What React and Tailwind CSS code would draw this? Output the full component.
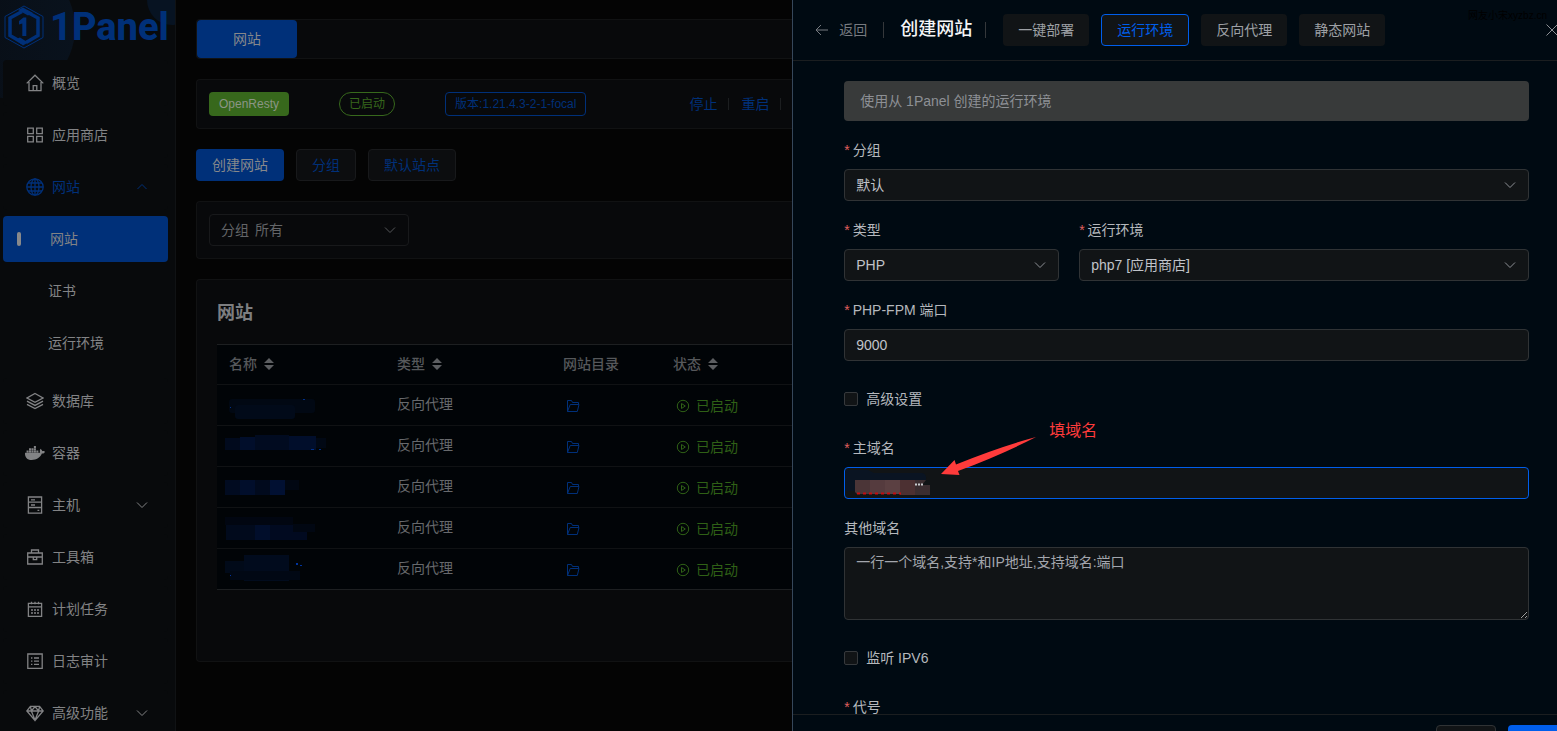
import { useState } from "react";
import { FaDocker } from "react-icons/fa";

function Icon({ children, className = "size-[18px]" }) {
  return (
    <svg
      viewBox="0 0 18 18"
      className={className}
      fill="none"
      stroke="currentColor"
      strokeWidth="1.3"
      aria-hidden
    >
      {children}
    </svg>
  );
}

const HomeIcon = () => (
  <Icon>
    <path d="M.7 9.4 9 1.2l8.3 8.2M3 8v8.6h12V8M7.2 16.6v-5h3.6v5" />
  </Icon>
);

const GridIcon = () => (
  <Icon>
    <path d="M1.7 2.2h5.6v5.4H1.7zM10.7 2.2h5.6v5.4h-5.6zM1.7 10.4h5.6v5.4H1.7zM10.7 10.4h5.6v5.4h-5.6z" />
  </Icon>
);

const GlobeIcon = () => (
  <Icon>
    <circle cx="9" cy="9" r="8.2" />
    <ellipse cx="9" cy="9" rx="4" ry="8.2" />
    <path d="M9 .8v16.4M.8 9h16.4M2 5h14M2 13h14" />
  </Icon>
);

const LayersIcon = () => (
  <Icon>
    <path d="M9 1.5 17 6 9 10.3 1 6zM1 9.2l8 4.2 8-4.2M1 12.3l8 4.2 8-4.2" />
  </Icon>
);

const HostIcon = () => (
  <Icon>
    <path d="M2.4 1h13.2v16.2H2.4zM2.4 6.2h13.2M2.4 11.5h13.2M5 3.8h4M5 9h4M11.5 14.3h1.8" />
  </Icon>
);

const ToolboxIcon = () => (
  <Icon>
    <path d="M1.7 5h14.6v11H1.7zM5.5 5V2h7v3M1.7 9h14.6M7.3 9v2.6h3.4V9" />
  </Icon>
);

const CalendarIcon = () => (
  <Icon>
    <path d="M2.4 3.3h13.2v13H2.4zM2.4 6.8h13.2M5.5 1.8v2.4M9 1.8v2.4M12.5 1.8v2.4" />
    <path d="M5 10h8M5 13h8" strokeDasharray="2 1" />
  </Icon>
);

const LogIcon = () => (
  <Icon>
    <path d="M1.8 2h14.4v14.4H1.8zM8 6h5M8 9.2h5M8 12.4h5M5 6h1.4M5 9.2h1.4M5 12.4h1.4" />
  </Icon>
);

const GemIcon = () => (
  <Icon>
    <path d="M4.4 2.4h9.2L17.2 7 9 16.4.8 7zM.8 7h16.4M5.4 7 9 16.2 12.6 7M4.4 2.4l1 4.6L9 2.6 12.6 7l1-4.6" />
  </Icon>
);

function Chevron({ up = false, className = "" }) {
  return (
    <svg viewBox="0 0 12 12" className={`size-3 ${className}`} fill="none" stroke="currentColor" aria-hidden>
      <path d={up ? "M1.5 8 6 3.5 10.500 8" : "M1 3.500 6 8.500 11 3.500"} />
    </svg>
  );
}

const FolderIcon = () => (
  <svg viewBox="0 0 14 14" className="size-3.5" fill="none" stroke="currentColor" aria-hidden>
    <path d="M1.500 12.500v-11h4l1 2h6v2M1.500 12.500h9.800l1.700-7H4.200z" />
  </svg>
);

const PlayIcon = () => (
  <svg viewBox="0 0 14 14" className="size-3.5" fill="none" stroke="currentColor" aria-hidden>
    <circle cx="7" cy="7" r="5.700" />
    <path d="M5.500 4.500v5L9.300 7z" />
  </svg>
);

const menu = [
  { label: "概览", icon: <HomeIcon /> },
  { label: "应用商店", icon: <GridIcon /> },
  {
    label: "网站",
    icon: <GlobeIcon />,
    open: true,
    children: [{ label: "网站", active: true }, { label: "证书" }, { label: "运行环境" }]
  },
  { label: "数据库", icon: <LayersIcon /> },
  { label: "容器", icon: <FaDocker className="size-5" /> },
  { label: "主机", icon: <HostIcon />, folded: true },
  { label: "工具箱", icon: <ToolboxIcon /> },
  { label: "计划任务", icon: <CalendarIcon /> },
  { label: "日志审计", icon: <LogIcon /> },
  { label: "高级功能", icon: <GemIcon />, folded: true }
];

// Hidden site names: [x, y, width, height, fill] inside the name cell
const sites = [
  [
    [12, 14, 86, 14, "#010813"],
    [18, 20, 60, 14, "#010a19"],
    [13, 22, 1, 1, "#00308a"],
    [86, 14, 2, 1, "#00308a"]
  ],
  [
    [8, 12, 15, 12, "#010a1d"],
    [23, 11, 15, 13, "#010e2b"],
    [38, 9, 34, 15, "#010b20"],
    [72, 10, 27, 14, "#010e2b"],
    [99, 12, 10, 10, "#010814"],
    [94, 23, 3, 1, "#00308a"],
    [102, 23, 2, 1, "#00308a"]
  ],
  [
    [8, 13, 15, 15, "#010b20"],
    [23, 13, 15, 15, "#010e2b"],
    [38, 13, 15, 15, "#010a1d"],
    [53, 13, 15, 15, "#011032"],
    [68, 13, 14, 10, "#010712"]
  ],
  [
    [8, 9, 68, 8, "#010611"],
    [9, 17, 29, 15, "#010a1c"],
    [38, 17, 15, 15, "#010e2b"],
    [53, 17, 37, 15, "#010a20"],
    [76, 16, 22, 8, "#010712"]
  ],
  [
    [8, 12, 20, 12, "#010a19"],
    [27, 6, 45, 26, "#010b1d"],
    [13, 22, 70, 9, "#010814"],
    [79, 14, 2, 2, "#0034a0"],
    [83, 16, 2, 1, "#0034a0"],
    [13, 26, 1, 1, "#0034a0"]
  ]
];

function Logo() {
  return (
    <div className="flex h-[60px] items-center gap-1.5 pb-1.5 pl-1 text-[#003079]">
      <svg viewBox="0 0 40 44" className="h-11 w-10 shrink-0" fill="none" stroke="currentColor" aria-hidden>
        <path d="M20 1 39 11.500v21L20 43 1 32.500v-21z" strokeWidth="1" />
        <path d="M22 6.500 34 13v17.500L22 37.500" strokeWidth="3.500" />
        <path d="M18 6.500 6 13v17.500l12 7" strokeWidth="3.500" />
        <path d="m14 5 5-2.500 10 5.500-5 2.500zM11 34.500l5-2 8 5-5 3z" fill="currentColor" stroke="none" />
        <path d="m15 16 4.500-3.500h2.800V31h-4V18.500L15 19.500z" fill="currentColor" stroke="none" />
      </svg>
      <span className="font-[Roboto] text-[38px] leading-[54px] font-extrabold">1Panel</span>
    </div>
  );
}

function Sidebar() {
  return (
    <aside className="relative w-44 shrink-0 overflow-hidden border-r border-[#101214] bg-[#080a0c] text-[#828385]">
      <div className="absolute -top-[42px] -left-[65px] size-[140px] rounded-full bg-linear-to-r from-[#080d14] to-[#09121d]" />
      <div className="absolute -top-[25px] -right-[22px] size-[50px] rounded-full bg-[#071322]" />
      <div className="relative">
        <Logo />
        <nav className="flex flex-col gap-1.5 pr-[7px] pl-[3px]">
          {menu.map((item) => (
            <div key={item.label} className={item.open ? "mb-1.5" : ""}>
              <a
                href="#"
                className={`flex h-[46px] items-center rounded bg-[#080a0c] pr-5 pl-[22px] ${item.open ? "text-[#003079]" : ""}`}
              >
                <span className="flex w-5 justify-center">{item.icon}</span>
                <span className="ml-[7px] flex-1">{item.label}</span>
                {item.open || item.folded ? <Chevron up={item.open} /> : null}
              </a>
              {item.children ? (
                <div className="mt-1.5 flex flex-col gap-1.5">
                  {item.children.map((sub) =>
                    sub.active ? (
                      <a
                        key={sub.label}
                        href="#"
                        aria-current="page"
                        className="flex h-[46px] items-center rounded bg-[#003079] pl-3.5"
                      >
                        <span className="h-3.5 w-1 rounded-sm bg-[#88898b]" />
                        <span className="ml-[29px]">{sub.label}</span>
                      </a>
                    ) : (
                      <a key={sub.label} href="#" className="flex h-[46px] items-center rounded pl-[45px]">
                        {sub.label}
                      </a>
                    )
                  )}
                </div>
              ) : null}
            </div>
          ))}
        </nav>
      </div>
    </aside>
  );
}

function Card({ className = "", children }) {
  return (
    <section className={`rounded-l border border-r-0 border-[#111213] bg-[#08090b] ${className}`}>{children}</section>
  );
}

function SortCaret() {
  return (
    <svg viewBox="0 0 10 12" className="h-3 w-2.5" fill="#5c5e61" aria-hidden>
      <path d="M0 5h10L5 0zM0 7h10l-5 5z" />
    </svg>
  );
}

function SiteTable() {
  const head = [
    { label: "名称", sort: true },
    { label: "类型", sort: true },
    { label: "网站目录" },
    { label: "状态", sort: true }
  ];

  return (
    <table className="w-full table-fixed border-y border-[#1d1f21] bg-[#010407] text-left">
      <colgroup>
        <col className="w-[168px]" />
        <col className="w-[166px]" />
        <col className="w-[110px]" />
        <col />
      </colgroup>
      <thead>
        <tr className="h-10 border-b border-[#101214] text-[#56585b]">
          {head.map((h) => (
            <th key={h.label} className="px-3 pb-0.5 font-medium">
              <span className="flex items-center gap-[7px]">
                {h.label}
                {h.sort ? <SortCaret /> : null}
              </span>
            </th>
          ))}
        </tr>
      </thead>
      <tbody>
        {sites.map((blocks, i) => (
          <tr key={i} className="h-[41px] border-b border-[#101214] last:border-b-0">
            <td>
              <svg className="block h-10 w-full" aria-hidden>
                {blocks.map(([x, y, w, h, fill], n) => (
                  <rect key={n} x={x} y={y} width={w} height={h} rx={w > 9 && blocks.length < 5 ? 3 : 0} fill={fill} />
                ))}
              </svg>
            </td>
            <td className="px-3 pb-0.5 text-[#67696c]">反向代理</td>
            <td className="pt-0.5 pl-[15px]">
              <button type="button" aria-label="打开目录" className="flex text-[#00307a]">
                <FolderIcon />
              </button>
            </td>
            <td className="pt-0.5 pl-[15px]">
              <button type="button" className="flex items-center gap-1.5 text-[#2f6016]">
                <PlayIcon />
                已启动
              </button>
            </td>
          </tr>
        ))}
      </tbody>
    </table>
  );
}

function Websites() {
  return (
    <main className="flex min-w-0 flex-1 flex-col gap-5 overflow-hidden bg-[#040404] pt-[19px] pl-5">
      <Card className="flex">
        <button type="button" className="h-[38px] w-[100px] rounded bg-[#003079] text-[#86888b]">
          网站
        </button>
      </Card>

      <Card className="flex h-[50px] items-center px-3 text-xs whitespace-nowrap">
        <span className="flex h-6 items-center rounded bg-[#37681c] px-2.5 text-[#8b9585]">OpenResty</span>
        <span className="ml-[50px] flex h-6 items-center rounded-full border border-[#37681c] px-[9px] text-[#37681c]">
          已启动
        </span>
        <span className="ml-[50px] flex h-6 items-center rounded border border-[#003079] px-[9px] text-[#003079]">
          版本:1.21.4.3-2-1-focal
        </span>
        <div className="ml-[103px] flex items-center text-sm text-[#003079]">
          <button type="button">停止</button>
          <span className="mr-3 ml-[11px] h-3 w-px bg-[#1c1e20]" />
          <button type="button">重启</button>
          <span className="mr-3 ml-[11px] h-3 w-px bg-[#1c1e20]" />
        </div>
      </Card>

      <div className="flex gap-3">
        <button type="button" className="h-8 rounded bg-[#003079] px-4 text-[#86888b]">
          创建网站
        </button>
        <button type="button" className="h-8 rounded border border-[#18191b] bg-[#0c0d0f] px-[15px] text-[#003079]">
          分组
        </button>
        <button type="button" className="h-8 rounded border border-[#18191b] bg-[#0c0d0f] px-[15px] text-[#003079]">
          默认站点
        </button>
      </div>

      <Card className="p-3">
        <label className="flex h-8 w-[200px] items-center gap-1.5 rounded border border-[#18191b] px-3 pl-[11px] text-[#636568]">
          分组
          <span className="flex flex-1 items-center">
            <select className="w-full appearance-none outline-none">
              <option>所有</option>
            </select>
            <Chevron className="shrink-0 text-[#55575a]" />
          </span>
        </label>
      </Card>

      <Card className="h-[383px] py-5 pl-5">
        <h2 className="mb-[17px] text-lg leading-[27px] font-bold text-[#7d7e80]">网站</h2>
        <SiteTable />
      </Card>
    </main>
  );
}

const inputClass =
  "block h-8 w-full appearance-none rounded border border-[#303335] bg-[#111416] px-[11px] text-[#c0c3c9] outline-none";

function Field({ id, label, required = true, className = "", children }) {
  return (
    <div className={`relative shrink-0 ${className}`}>
      <label htmlFor={id} className="mb-2 block leading-[22px] text-[#b5b8bd]">
        {required ? <span className="mr-[3px] text-[#e0605f]">*</span> : null}
        {label}
      </label>
      {children}
    </div>
  );
}

function Select({ id, options }) {
  return (
    <div className="relative">
      <select id={id} className={inputClass}>
        {options.map((o) => (
          <option key={o}>{o}</option>
        ))}
      </select>
      <Chevron className="pointer-events-none absolute top-2.5 right-[13px] text-[#8d9095]" />
    </div>
  );
}

function Check({ id, label }) {
  return (
    <div className="flex h-10 shrink-0 items-center gap-2 text-[#b5b8bd]">
      <input id={id} type="checkbox" className="size-3.5 appearance-none rounded-xs border border-[#36393c] bg-[#111416] checked:bg-[#005eeb]" />
      <label htmlFor={id}>{label}</label>
    </div>
  );
}

// Pixelated domain value inside the focused field
function HiddenDomain() {
  return (
    <svg viewBox="0 0 90 28" className="pointer-events-none absolute top-8 left-0 h-7 w-[90px]" aria-hidden>
      <path d="M2 1h22l6 3h48q5 1 4 7H11v11H1z" fill="#0a1422" />
      <path d="M11 11h15v14H13l-2-2z" fill="#4b3537" />
      <path d="M26 11h15v14H26z" fill="#553b3e" />
      <path d="M41 11h15v14H41z" fill="#5b4042" />
      <path d="M56 11h15v15H56z" fill="#4c3032" />
      <path d="M71 11h11l-4 5h8v10H71z" fill="#3b2d30" />
      <path d="M13 24.500h44" stroke="#c40d10" strokeWidth="2" strokeDasharray="3 3" />
      <path d="M71 15.500h8" stroke="#c8cacd" strokeWidth="2" strokeDasharray="2 1" />
    </svg>
  );
}

function CreateDrawer() {
  const tabs = ["一键部署", "运行环境", "反向代理", "静态网站"];
  const [tab, setTab] = useState("运行环境");

  return (
    <section
      role="dialog"
      aria-label="创建网站"
      className="flex w-[49.12%] shrink-0 flex-col overflow-hidden border-l border-[#36475a] bg-[#000a12]"
    >
      <header className="relative flex h-[61px] shrink-0 items-center border-b border-[#1b1e20] pl-[22px] whitespace-nowrap">
        <button type="button" className="flex items-center gap-[11px] text-[#777a80]">
          <svg viewBox="0 0 13 12" className="h-3 w-[13px]" fill="none" stroke="currentColor" aria-hidden>
            <path d="M13 6H1.500M6 1 1 6l5 5" />
          </svg>
          返回
        </button>
        <span className="mx-4 h-4 w-px bg-[#35383b]" />
        <h1 className="pb-0.5 text-lg leading-6 font-medium text-[#f4f5f7]">创建网站</h1>
        <span className="mr-[17px] ml-[13px] h-4 w-px bg-[#35383b]" />
        <div className="flex gap-3">
          {tabs.map((t) => (
            <button
              key={t}
              type="button"
              onClick={() => setTab(t)}
              className={`h-8 rounded bg-[#111416] px-[15px] ${
                t === tab ? "border border-[#005eeb] text-[#005eeb]" : "text-[#9da0a5]"
              }`}
            >
              {t}
            </button>
          ))}
        </div>
        <span className="absolute top-2 right-2.5 text-[10px] leading-4 text-black">网友小宋xyzbz.cn</span>
        <button type="button" aria-label="关闭" className="absolute top-6 -right-[1px] text-[#8d9095]">
          <svg viewBox="0 0 12 12" className="size-3" fill="none" stroke="currentColor" aria-hidden>
            <path d="m.500.500 11 11M11.500.500l-11 11" />
          </svg>
        </button>
      </header>

      <form className="flex min-h-0 flex-1 flex-col gap-[18px] overflow-hidden pt-5 pr-7 pl-[51px]">
        <p className="flex h-10 shrink-0 items-center rounded bg-[#383a3a] px-4 text-[#8d9095]">
          使用从 1Panel 创建的运行环境
        </p>
        <Field id="group" label="分组">
          <Select id="group" options={["默认"]} />
        </Field>
        <div className="grid shrink-0 grid-cols-3 gap-5">
          <Field id="kind" label="类型">
            <Select id="kind" options={["PHP"]} />
          </Field>
          <Field id="runtime" label="运行环境" className="col-span-2">
            <Select id="runtime" options={["php7 [应用商店]"]} />
          </Field>
        </div>
        <Field id="port" label="PHP-FPM 端口">
          <input id="port" type="text" defaultValue="9000" className={inputClass} />
        </Field>
        <Check id="advanced" label="高级设置" />
        <Field id="domain" label="主域名">
          <input
            id="domain"
            type="text"
            className="block h-8 w-full rounded border border-[#005eeb] bg-[#111416] px-[11px] text-[#c0c3c9] outline-none"
          />
          <HiddenDomain />
          <svg viewBox="0 0 96 40" className="pointer-events-none absolute top-0 left-[97px] h-10 w-24" fill="#ff3b3b" aria-hidden>
            <path d="M0 37 13.500 23l1.500 4.500Q58 10 95 0 60 18 17 34l1.500 4z" />
          </svg>
          <span className="absolute -top-[18px] left-[205px] text-base leading-6 text-[#ff3b3b]">填域名</span>
        </Field>
        <Field id="others" label="其他域名" required={false}>
          <textarea
            id="others"
            placeholder="一行一个域名,支持*和IP地址,支持域名:端口"
            className="block h-[73px] w-full resize-y rounded border border-[#303335] bg-[#111416] px-[11px] py-1 leading-[21px] outline-none placeholder:text-[#a3a6ad]"
          />
        </Field>
        <Check id="ipv6" label="监听 IPV6" />
        <Field id="alias" label="代号">
          <input id="alias" type="text" className={inputClass} />
        </Field>
      </form>

      <footer className="flex h-[17px] shrink-0 justify-end gap-3 overflow-hidden border-t border-[#1b1e20] pt-2.5">
        <button type="button" aria-label="取消" className="h-8 w-[60px] rounded border border-[#303335] bg-[#111416]" />
        <button type="button" aria-label="确认" className="-mr-[11px] h-8 w-[60px] rounded bg-[#005eeb]" />
      </footer>
    </section>
  );
}

export default function App() {
  return (
    <div className="flex h-screen overflow-hidden bg-[#040404] font-['Liberation_Sans','Noto_Sans_CJK_SC',sans-serif] text-sm">
      <Sidebar />
      <Websites />
      <CreateDrawer />
    </div>
  );
}
